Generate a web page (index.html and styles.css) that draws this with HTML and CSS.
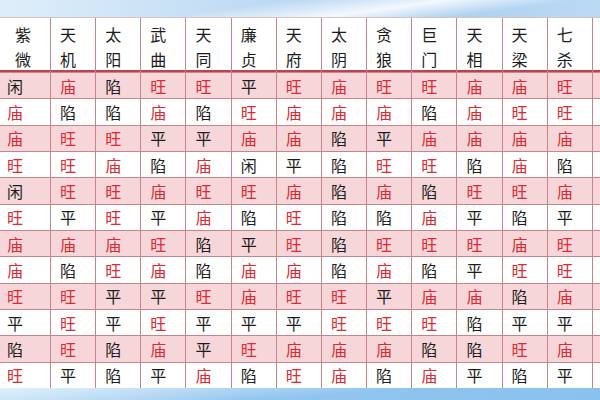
FILE: index.html
```html
<!DOCTYPE html>
<html lang="zh-CN">
<head>
<meta charset="utf-8">
<title>紫微斗数星曜庙旺表</title>
<link rel="stylesheet" href="styles.css">
</head>
<body>
<div class="page">
  <div class="sky-top"></div>
  <div class="grid" id="grid">
    <div class="hd first">紫<br>微</div>
    <div class="hd">天<br>机</div>
    <div class="hd">太<br>阳</div>
    <div class="hd">武<br>曲</div>
    <div class="hd">天<br>同</div>
    <div class="hd">廉<br>贞</div>
    <div class="hd">天<br>府</div>
    <div class="hd">太<br>阴</div>
    <div class="hd">贪<br>狼</div>
    <div class="hd">巨<br>门</div>
    <div class="hd">天<br>相</div>
    <div class="hd">天<br>梁</div>
    <div class="hd">七<br>杀</div>
    <div class="hd"></div>
  </div>
  <div class="sky-bottom"></div>
</div>
<script src="app.js"></script>
</body>
</html>
```

FILE: styles.css
```css
html, body {
  margin: 0;
  padding: 0;
  background: #ffffff;
  overflow: hidden;
}
.page {
  width: 600px;
  height: 400px;
  display: flex;
  flex-direction: column;
  font-family: "Noto Sans CJK SC", "Noto Sans", sans-serif;
  overflow: hidden;
}
.sky-top {
  height: 17px;
  flex: none;
  background:
    linear-gradient(172deg, rgba(255,255,255,0) 40%, rgba(255,255,255,0.85) 62%, rgba(255,255,255,0) 80%),
    linear-gradient(90deg, #dfeefa 0%, #c4def4 35%, #a9cff0 70%, #bcd9f3 100%);
}
.grid {
  flex: none;
  display: grid;
  grid-template-columns: 50px repeat(12, 44.17px) 1fr;
  grid-template-rows: 54px repeat(12, 25.33px);
  gap: 1px;
  background: #c5868b;
  border-top: 1px solid #d6c3c5;
  height: 370px;
}
.hd {
  background: #ffffff;
  border-bottom: 2px solid #b9464e;
  color: #1c1c1c;
  font-size: 16px;
  line-height: 25px;
  padding: 4px 0 0 9px;
  box-sizing: border-box;
}
.hd.first {
  padding-left: 15px;
}
.cell {
  display: flex;
  align-items: center;
  padding-left: 9px;
  font-size: 16px;
  color: #1c1c1c;
}
.cell.first {
  padding-left: 7px;
}
.row-pink {
  background: #f6d6d9;
}
.row-white {
  background: #ffffff;
}
.red {
  color: #de2a33;
}
.sky-bottom {
  flex: 1;
  background:
    linear-gradient(176deg, rgba(255,255,255,0.6) 0%, rgba(255,255,255,0) 55%),
    linear-gradient(90deg, #b4d8f3 0%, #93c6ef 40%, #8ac1ee 100%);
}
```

FILE: app.js
```js
var rows = [
  "闲庙陷旺旺平旺庙旺旺庙庙旺",
  "庙陷陷庙陷旺庙庙庙陷庙旺旺",
  "庙旺旺平平庙庙陷平庙庙庙庙",
  "旺旺庙陷庙闲平陷旺旺陷庙陷",
  "闲旺旺庙旺旺庙陷庙陷旺旺庙",
  "旺平旺平庙陷旺陷陷庙平陷平",
  "庙庙庙旺陷平旺陷旺旺旺庙旺",
  "庙陷旺庙陷庙庙陷庙陷平旺旺",
  "旺旺平平旺庙旺旺平庙庙陷庙",
  "平旺平旺平平平旺旺旺陷平平",
  "陷旺陷庙平旺庙庙庙陷陷旺庙",
  "旺平陷平庙陷旺庙陷庙平陷平"
];
var grid = document.getElementById("grid");
rows.forEach(function (r, i) {
  var rowClass = i % 2 === 0 ? "row-pink" : "row-white";
  var chars = r.split("");
  chars.push("");
  chars.forEach(function (ch, j) {
    var d = document.createElement("div");
    d.className = "cell " + rowClass + (j === 0 ? " first" : "") +
      ((ch === "庙" || ch === "旺") ? " red" : "");
    d.textContent = ch;
    grid.appendChild(d);
  });
});
```
